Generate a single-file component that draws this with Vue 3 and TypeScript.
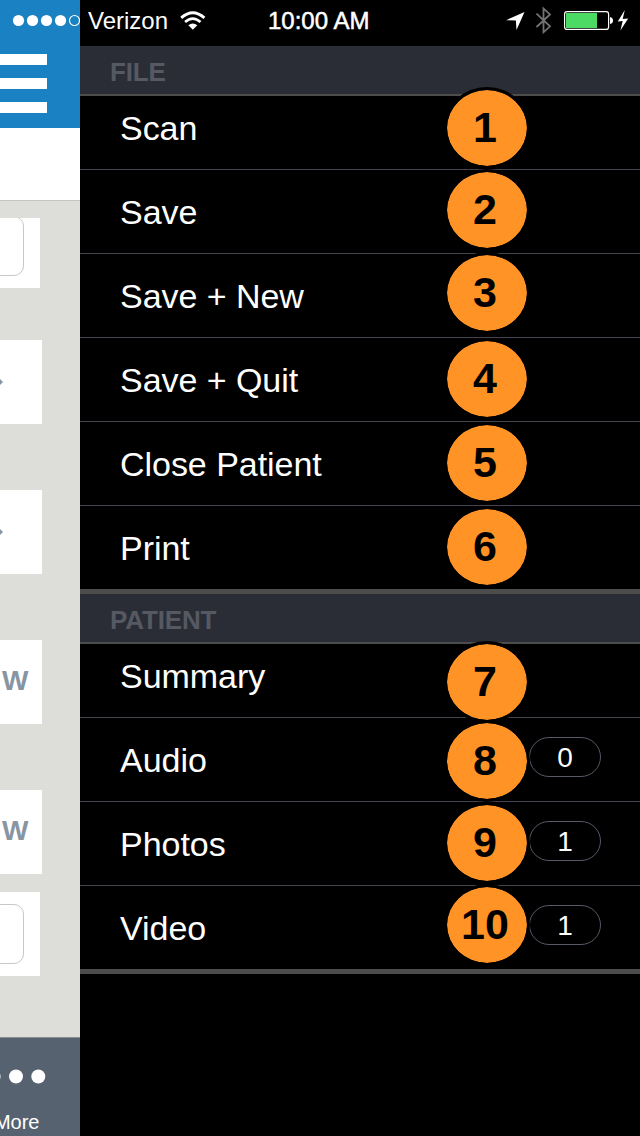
<script setup lang="ts">
interface Item {
  label: string
  marker: number
  pos: string
  count?: number
}

interface Section {
  title: string
  items: Item[]
}

const sections: Section[] = [
  {
    title: 'FILE',
    items: [
      { label: 'Scan', marker: 1, pos: 'm-first-file' },
      { label: 'Save', marker: 2, pos: 'm-2' },
      { label: 'Save + New', marker: 3, pos: 'm-1' },
      { label: 'Save + Quit', marker: 4, pos: 'm-3' },
      { label: 'Close Patient', marker: 5, pos: 'm-3' },
      { label: 'Print', marker: 6, pos: 'm-3' },
    ],
  },
  {
    title: 'PATIENT',
    items: [
      { label: 'Summary', marker: 7, pos: 'm-first-patient' },
      { label: 'Audio', marker: 8, pos: 'm-5', count: 0 },
      { label: 'Photos', marker: 9, pos: 'm-3', count: 1 },
      { label: 'Video', marker: 10, pos: 'm-1', count: 1 },
    ],
  },
]
</script>

<template>
  <div class="screen">
    <aside class="page">
      <div class="bluebar">
        <svg class="signal" width="80" height="14" viewBox="0 0 80 14">
          <circle v-for="n in 4" :key="n" :cx="4.5 + n * 14" cy="6.5" r="5.6" fill="#fff" />
          <circle cx="74.5" cy="6.5" r="5" fill="none" stroke="#fff" stroke-width="1.1" />
        </svg>
        <div class="burger"><i></i><i></i><i></i></div>
      </div>
      <div class="whitebar"></div>
      <div class="content">
        <div class="card field top"><div class="input"></div></div>
        <div class="card"><svg width="4" height="8" viewBox="0 0 4 8"><path d="M-3 1H0L3 4 0 7h-3z" fill="#8795a3" /></svg></div>
        <div class="card"><svg width="4" height="8" viewBox="0 0 4 8"><path d="M-3 1H0L3 4 0 7h-3z" fill="#8795a3" /></svg></div>
        <div class="card word"><span>SHOW</span></div>
        <div class="card word"><span>SHOW</span></div>
        <div class="card field"><div class="input"></div></div>
      </div>
      <div class="tabbar">
        <svg width="80" height="16" viewBox="0 0 80 16">
          <circle cx="-6.5" cy="7.5" r="7" fill="#fff" />
          <circle cx="16" cy="7.5" r="7" fill="#fff" />
          <circle cx="38.3" cy="7.5" r="7" fill="#fff" />
        </svg>
        <span>More</span>
      </div>
    </aside>

    <main class="drawer">
      <header class="status">
        <span class="carrier">Verizon</span>
        <svg class="wifi" width="26" height="20" viewBox="0 0 26 20">
          <path d="M1.2 6.900Q12.800-3.300 24.400 6.900" fill="none" stroke="#fff" stroke-width="2.9" />
          <path d="M5.100 11Q12.800 4.200 20.500 11" fill="none" stroke="#fff" stroke-width="2.7" />
          <path d="M8.300 14.300Q12.800 10.500 17.300 14.300L12.800 18.800z" fill="#fff" />
        </svg>
        <span class="time">10:00 AM</span>
        <svg class="tray" width="130" height="32" viewBox="500 4 130 32">
          <path d="M524.500 12L506 20.200l9.900.4.600 9.400z" fill="#fff" />
          <path d="M536.500 13.700l13.500 12.600-6.500 6V8.500l6.500 5.900L536.500 27" fill="none" stroke="#737373" stroke-width="1.8" />
          <rect x="564.600" y="11.600" width="44" height="17.800" rx="2.500" fill="none" stroke="#fff" stroke-width="1.2" />
          <path d="M566 13h31v15h-31z" fill="#4cd964" />
          <path d="M610 17q3 .5 3 3.500t-3 3.500z" fill="#fff" />
          <path d="M624.800 10l-7 11.500 4.900-.5-2.300 9.400 7.800-12-5.500.6z" fill="#fff" />
        </svg>
      </header>
      <section v-for="s in sections" :key="s.title">
        <h2>{{ s.title }}</h2>
        <ul>
          <li v-for="it in s.items" :key="it.label">
            <span class="label">{{ it.label }}</span>
            <b class="marker" :class="it.pos"><span>{{ it.marker }}</span></b>
            <em v-if="it.count !== undefined" class="count">{{ it.count }}</em>
          </li>
        </ul>
      </section>
    </main>
  </div>
</template>

<style>
body { margin: 0; background: #000; }
</style>

<style scoped>
.screen {
  width: 640px; height: 1136px; display: flex; overflow: hidden; background: #000;
  font-family: "Liberation Sans", Arial, sans-serif; color: #fff;
}
.page { width: 80px; display: flex; flex-direction: column; overflow: hidden; background: #dddeda; }
.bluebar { flex: none; height: 128px; box-sizing: border-box; padding-top: 14px; background: #1a81c2; }
.signal { display: block; }
.burger { padding-top: 26px; display: flex; flex-direction: column; gap: 13px; }
.burger i { display: block; width: 47px; height: 11px; background: #fff; }
.whitebar { flex: none; height: 72px; background: #fff; border-bottom: 1px solid #c5c5c3; }
.content { flex: 1; min-height: 0; padding-top: 17px; overflow: hidden; }
.card { width: 42px; height: 84px; margin-bottom: 66px; background: #fff; display: flex; align-items: center; overflow: hidden; }
.field { width: 40px; align-items: flex-start; }
.input { flex: none; width: 40px; height: 60px; margin: 12px 0 0 -16px; box-sizing: border-box; border: 1px solid #c8c8c8; border-radius: 10px; }
.top { height: 70px; margin-bottom: 52px; }
.top .input { margin-top: -2px; }
.word { justify-content: flex-end; box-sizing: border-box; padding-right: 12px; color: #8795a3; font: bold 28px/82px "Liberation Sans", Arial, sans-serif; letter-spacing: 1.6px; }
.word span { height: 84px; }
.word + .word { margin-bottom: 18px; }
.tabbar { flex: none; height: 98px; background: #566270; border-top: 1px solid #898f8e; display: flex; flex-direction: column; overflow: hidden; }
.tabbar svg { margin-top: 31px; flex: none; }
.tabbar span { width: 39.500px; display: flex; justify-content: flex-end; margin-top: 26px; font-size: 20px; line-height: 22px; }

.drawer { width: 560px; }
.status { height: 46px; display: flex; align-items: flex-start; box-sizing: border-box; padding: 4px 10px 0 8px; font-size: 24px; line-height: 34px; }
.carrier { width: 92px; }
.wifi { margin-top: 7px; }
.time { margin-left: 62px; width: 165px; -webkit-text-stroke: .5px #fff; }
.tray { margin-left: auto; }
h2 { margin: 0; height: 48px; padding-left: 30px; background: #2a2d36; border-bottom: 2px solid #4c4c4c; color: #565962; font-size: 26px; line-height: 52px; font-weight: bold; letter-spacing: -.15px; }
ul { margin: 0; padding: 0; list-style: none; border-bottom: 5px solid #4c4c4c; }
li { position: relative; height: 83px; border-bottom: 1px solid #43454e; display: flex; align-items: center; justify-content: space-between; padding: 0 39px 0 40px; }
li:first-child { height: 73px; }
li:last-child { border-bottom: 0; }
.label { font-size: 34px; line-height: 40px; letter-spacing: -.04px; }
li:first-child .label { margin-top: -10px; }
.marker {
  position: absolute; left: 364px; top: 0; width: 80px; height: 76px; border: 3px solid #000; border-radius: 50%;
  background: #ff9326; background-clip: padding-box; color: #000; font-size: 43px; line-height: 75px; text-align: center; z-index: 1;
}
.marker span { position: relative; left: -2px; }
.m-first-file { top: -9px; }
.m-first-patient { top: -3px; }
.m-1 { top: -2px; }
.m-2 { top: -1px; }
.m-3 { top: 0; }
.m-5 { top: 2px; }
.count { width: 70px; height: 38px; border: 1px solid #555a66; border-radius: 20px; font-size: 28px; line-height: 39px; font-style: normal; text-align: center; margin-top: -5px; }
</style>
